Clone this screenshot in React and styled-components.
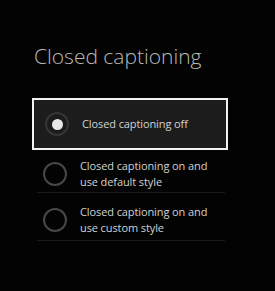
import styled, { createGlobalStyle } from "styled-components";

const Global = createGlobalStyle`
  html, body {
    margin: 0;
    background: #030303;
  }
  body {
    font-family: "Open Sans", "Liberation Sans", sans-serif;
  }
`;

const Page = styled.div`
  width: 275px;
  height: 291px;
  box-sizing: border-box;
  padding: 43px 0 0 32px;
  background: #030303;
`;

const Title = styled.h1`
  margin: 0 0 0 2px;
  font-size: 21px;
  font-weight: 300;
  color: #b9b9b9;
  line-height: 26px;
`;

const List = styled.div`
  width: 196px;
  margin-top: 29px;
  display: flex;
  flex-direction: column;
`;

const Option = styled.div`
  display: flex;
  align-items: center;
  gap: 13px;
  box-sizing: border-box;
  height: ${(p) => p.$height}px;
  padding: ${(p) => (p.$selected ? "0 0 0 11px" : "6px 0 0 6px")};
  margin: ${(p) => (p.$selected ? "0" : "0 3px 0 5px")};
  border: ${(p) => (p.$selected ? "2px solid #f2f2f2" : "none")};
  border-bottom: ${(p) => (p.$selected ? "2px solid #f2f2f2" : "1px solid #1b1b1b")};
  background: ${(p) => (p.$selected ? "#1c1c1c" : "transparent")};
`;

const Radio = styled.span`
  flex: none;
  width: 24px;
  height: 24px;
  box-sizing: border-box;
  border-radius: 50%;
  border: 2px solid ${(p) => (p.$checked ? "#353535" : "#484848")};
  display: flex;
  align-items: center;
  justify-content: center;
  &::after {
    content: "";
    display: ${(p) => (p.$checked ? "block" : "none")};
    width: 11px;
    height: 11px;
    border-radius: 50%;
    background: #e8e8e8;
  }
`;

const Label = styled.span`
  font-size: 11px;
  line-height: 16px;
  letter-spacing: -0.1px;
  color: #d2d2d2;
  width: 140px;
`;

const options = [
  { label: "Closed captioning off", checked: true, height: 52 },
  { label: "Closed captioning on and use default style", height: 43 },
  { label: "Closed captioning on and use custom style", height: 48 },
];

export default function App() {
  return (
    <Page>
      <Global />
      <Title>Closed captioning</Title>
      <List>
        {options.map((o, i) => (
          <Option key={i} $selected={o.checked} $height={o.height}>
            <Radio $checked={o.checked} />
            <Label>{o.label}</Label>
          </Option>
        ))}
      </List>
    </Page>
  );
}
